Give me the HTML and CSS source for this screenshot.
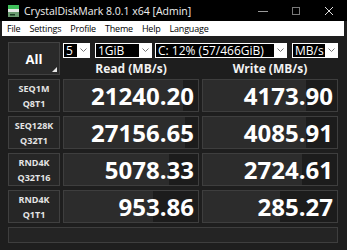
FILE: index.html
```html
<!DOCTYPE html>
<html>
<head>
<meta charset="utf-8">
<link rel="stylesheet" href="styles.css">
</head>
<body>
<div class="window">
  <div class="titlebar">
    <svg class="app-icon" width="11" height="12" viewBox="0 0 11 12">
      <rect x="0" y="0" width="11" height="4" fill="#3fbf5a"/>
      <rect x="0" y="4" width="11" height="3" fill="#e8e8e8"/>
      <rect x="0" y="7" width="11" height="5" fill="#6a9a70"/>
      <rect x="2" y="9" width="5" height="1.5" fill="#1b3d22"/>
    </svg>
    <span class="title">CrystalDiskMark 8.0.1 x64 [Admin]</span>
    <div class="controls">
      <span class="ctl"><svg width="10" height="10" viewBox="0 0 10 10"><line x1="0" y1="5.5" x2="10" y2="5.5" stroke="#9a9a9a" stroke-width="1"/></svg></span>
      <span class="ctl"><svg width="10" height="10" viewBox="0 0 10 10"><rect x="1.5" y="1.5" width="7" height="7" fill="none" stroke="#7a7a7a" stroke-width="1"/></svg></span>
      <span class="ctl"><svg width="10" height="10" viewBox="0 0 10 10"><path d="M1 1 L9 9 M9 1 L1 9" stroke="#e0e0e0" stroke-width="1"/></svg></span>
    </div>
  </div>
  <div class="menubar">
    <span>File</span><span>Settings</span><span>Profile</span><span>Theme</span><span>Help</span><span>Language</span>
  </div>
  <div class="main">
    <div class="grid">
      <div class="all">All</div>
      <div class="combos">
        <div class="combo c-count"><span class="val">5</span><span class="chev"><svg width="7" height="4" viewBox="0 0 7 4"><polyline points="0.5,0.5 3.5,3.5 6.5,0.5" fill="none" stroke="#777" stroke-width="1"/></svg></span></div>
        <div class="combo c-size"><span class="val">1GiB</span><span class="chev"><svg width="7" height="4" viewBox="0 0 7 4"><polyline points="0.5,0.5 3.5,3.5 6.5,0.5" fill="none" stroke="#777" stroke-width="1"/></svg></span></div>
        <div class="combo c-drive"><span class="val">C: 12% (57/466GiB)</span><span class="chev"><svg width="7" height="4" viewBox="0 0 7 4"><polyline points="0.5,0.5 3.5,3.5 6.5,0.5" fill="none" stroke="#777" stroke-width="1"/></svg></span></div>
        <div class="combo c-unit"><span class="val">MB/s</span><span class="chev"><svg width="7" height="4" viewBox="0 0 7 4"><polyline points="0.5,0.5 3.5,3.5 6.5,0.5" fill="none" stroke="#777" stroke-width="1"/></svg></span></div>
      </div>
      <div class="hdr">Read (MB/s)</div>
      <div class="hdr">Write (MB/s)</div>

      <div class="label"><span>SEQ1M</span><span>Q8T1</span></div>
      <div class="value" style="--p:88.8%">21240.20</div>
      <div class="value" style="--p:77.0%">4173.90</div>

      <div class="label"><span>SEQ128K</span><span>Q32T1</span></div>
      <div class="value" style="--p:90.6%">27156.65</div>
      <div class="value" style="--p:76.9%">4085.91</div>

      <div class="label"><span>RND4K</span><span>Q32T16</span></div>
      <div class="value" style="--p:78.4%">5078.33</div>
      <div class="value" style="--p:73.9%">2724.61</div>

      <div class="label"><span>RND4K</span><span>Q1T1</span></div>
      <div class="value" style="--p:66.3%">953.86</div>
      <div class="value" style="--p:57.6%">285.27</div>

      <div class="comment"></div>
    </div>
  </div>
</div>
</body>
</html>
```
FILE: styles.css
```css
* { box-sizing: border-box; margin: 0; padding: 0; }
html, body { width: 347px; height: 250px; overflow: hidden; }
body {
  background: #1e1e1e;
  font-family: "Open Sans", "Noto Sans", sans-serif;
}
.window { width: 347px; height: 250px; background: #1e1e1e; }

.titlebar {
  height: 21px;
  background: #000;
  display: flex;
  align-items: center;
  padding-left: 8px;
  padding-right: 2px;
  color: #f0f0f0;
  font-size: 10.5px;
}
.app-icon { margin-right: 5px; flex: none; }
.title { flex: 1; white-space: nowrap; }
.controls { display: flex; }
.ctl { width: 33px; height: 21px; display: flex; align-items: center; justify-content: center; }

.menubar {
  height: 15px;
  margin: 0 3px 0 2px;
  background: #fff;
  color: #000;
  display: flex;
  align-items: center;
  gap: 9px;
  padding-left: 5px;
  font-size: 9px;
  letter-spacing: -0.2px;
}

.main { padding: 6px 9px 0 8px; }
.grid {
  display: grid;
  grid-template-columns: 52px 136px 136px;
  grid-template-rows: 16px 13px repeat(4, 33px) 16px;
  column-gap: 3px;
  row-gap: 4px;
}

.all {
  grid-row: 1 / 3;
  grid-column: 1;
  background: #2a2a2a;
  border: 1px solid #424242;
  color: #fff;
  font-weight: 700;
  font-size: 13px;
  display: flex;
  align-items: center;
  justify-content: center;
  position: relative;
}
.all::after {
  content: "";
  position: absolute;
  right: 2px;
  bottom: 2px;
  border-style: solid;
  border-width: 0 0 5px 5px;
  border-color: transparent transparent #e8e8e8 transparent;
}

.combos {
  grid-row: 1;
  grid-column: 2 / 4;
  display: flex;
  align-items: center;
}
.combo {
  height: 15px;
  background: #fff;
  padding: 1px;
  display: flex;
  align-items: stretch;
}
.combo .val {
  flex: 1;
  background: #000;
  color: #fff;
  font-size: 12px;
  line-height: 13px;
  padding-left: 2px;
  white-space: nowrap;
}
.combo .chev { width: 12px; flex: none; display: flex; align-items: center; justify-content: center; }
.c-count { width: 27px; margin-right: 5px; }
.c-size { width: 57px; margin-right: 3px; }
.c-drive { width: 132px; margin-right: 5px; }
.c-unit { width: 46px; }

.hdr {
  grid-row: 2;
  color: #f2f2f2;
  font-weight: 700;
  font-size: 12px;
  line-height: 13px;
  text-align: center;
}

.label {
  background: #262626;
  border: 1px solid #404040;
  color: #e4e4e4;
  font-weight: 700;
  font-size: 9px;
  line-height: 15px;
  display: flex;
  flex-direction: column;
  align-items: center;
  justify-content: center;
}

.value {
  border: 1px solid #3e3e3e;
  background: linear-gradient(to right, #2c2c2c var(--p), #1c1c1c var(--p));
  color: #fff;
  font-weight: 700;
  font-size: 24px;
  display: flex;
  align-items: center;
  justify-content: flex-end;
  padding-right: 4px;
}

.comment {
  grid-column: 1 / 4;
  background: #242424;
  border: 1px solid #3e3e3e;
}
```
